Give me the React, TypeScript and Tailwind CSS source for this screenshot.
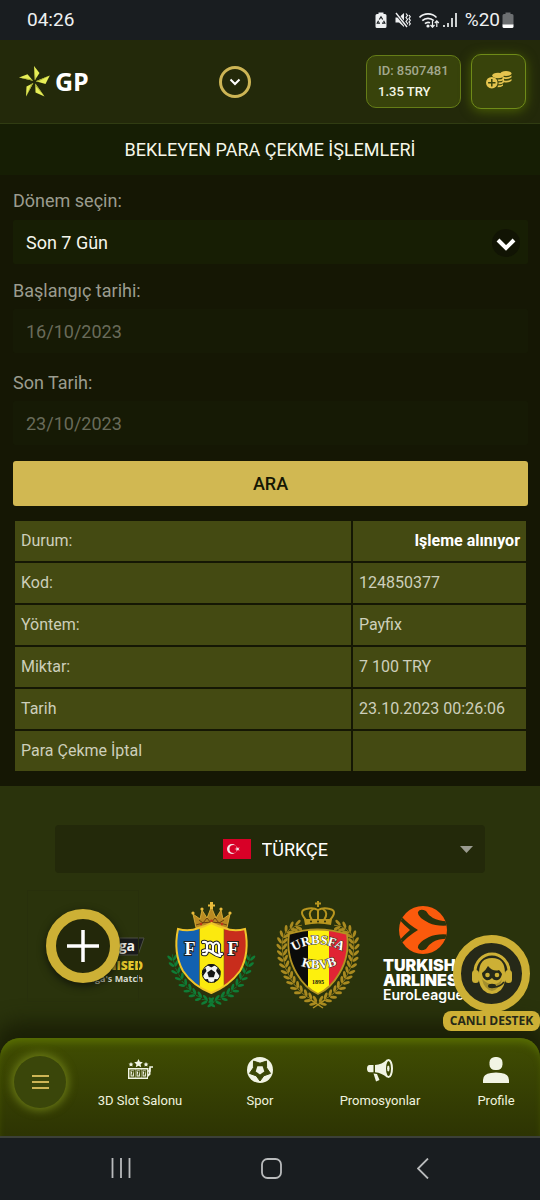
const rows = [
  { label: "Kod:", value: "124850377" },
  { label: "Yöntem:", value: "Payfix" },
  { label: "Miktar:", value: "7 100 TRY" },
  { label: "Tarih", value: "23.10.2023 00:26:06" },
  { label: "Para Çekme İptal", value: "" },
];

const StatusBar = () => {
  return (
    <div className="h-10 bg-[#191d20] pl-[27px] pr-[26px] flex items-center justify-between text-[#eef0f1]">
      <p className="text-[19px]">04:26</p>
      <div className="flex items-center gap-2">
        <svg width="12" height="17" viewBox="0 0 12 17">
          <path
            d="M3.5 2V.5h5V2H10a1.500 1.500 0 0 1 1.500 1.500v11A1.500 1.500 0 0 1 10 16H2a1.500 1.500 0 0 1-1.500-1.500v-11A1.500 1.500 0 0 1 2 2z"
            fill="#eef0f1"
          />
          <path
            d="M4.300 7.500 6 4.800l1.700 2.700M8.600 8.800l1.200 2.400H7M5 11.200H2.300l1.200-2.400"
            fill="none"
            stroke="#191d20"
            strokeWidth="1.200"
          />
        </svg>
        <svg width="16" height="16" viewBox="0 0 16 16">
          <path d="M.5 5.500H4L9 1v14l-5-4.500H.5z" fill="#eef0f1" />
          <path
            d="m11 1.500 1.500 2L11 5.500l1.500 2-1.500 2 1.500 2-1.500 2M14 3l1.300 1.800L14 6.500l1.300 1.800L14 10l1.300 1.800L14 13.500"
            fill="none"
            stroke="#eef0f1"
            strokeWidth="1.200"
          />
          <path d="m1 1 11 14" stroke="#191d20" strokeWidth="3" />
          <path d="m1 1 11 14" stroke="#eef0f1" strokeWidth="1.400" />
        </svg>
        <svg width="38" height="16" viewBox="0 0 38 16" fill="none">
          <g stroke="#eef0f1" strokeWidth="1.700">
            <path d="M.5 5.500a12 12 0 0 1 17 0M3.300 8.700a8 8 0 0 1 11.400 0M6 11.700a4.500 4.500 0 0 1 5-1" />
          </g>
          <circle cx="9" cy="14" r="1.600" fill="#eef0f1" />
          <path
            d="M13.500 9v6m-2-2 2 2.200 2-2.200M17.800 15V9m-2 2 2-2.200 2 2.200"
            stroke="#eef0f1"
            strokeWidth="1.200"
          />
          <path
            d="M25 15v-2M29 15v-4M33 15V6M37 15V1"
            stroke="#eef0f1"
            strokeWidth="1.700"
          />
        </svg>
        <div className="flex items-center gap-[2px]">
          <p className="text-[19px]">%20</p>
          <svg width="12" height="17" viewBox="0 0 12 17">
            <path
              d="M3.500 2V.5h5V2H10a1.500 1.500 0 0 1 1.500 1.500V13H.5V3.500A1.500 1.500 0 0 1 2 2z"
              fill="#6c6f71"
            />
            <path d="M.5 12.500h11v2A1.500 1.500 0 0 1 10 16H2a1.500 1.500 0 0 1-1.500-1.500z" fill="#fff" />
          </svg>
        </div>
      </div>
    </div>
  );
};

const Logo = () => {
  return (
    <a href="#" className="flex items-center gap-[5px]">
      <svg width="31" height="31" viewBox="0 0 31 31">
        <g fill="#e6ee57">
          <path d="M15 0 20.500 7 15.800 14.200z" />
          <path d="M30.800 9.500 26.500 18 16.800 15.300z" />
          <path d="M25.500 30.500 16.500 26.500 16.300 17.500z" />
          <path d="M7 30.500 7.500 20.500 14.300 17z" />
          <path d="M0 11.500 8.500 8.200 14 14.800z" />
        </g>
        <g fill="#a8ad35">
          <path d="M15 0 15.800 14.200 16.600 13z" />
          <path d="M30.800 9.500 16.800 15.300l2 .5z" />
          <path d="M25.500 30.500 16.300 17.500v2.300z" />
          <path d="M7 30.500 14.300 17l-2 1z" />
          <path d="M0 11.500 14 14.800l-1.300-1.500z" />
        </g>
      </svg>
      <span className="font-['Open_Sans'] text-[25px] font-bold text-white">GP</span>
    </a>
  );
};

const Header = () => {
  return (
    <header className="h-[84px] bg-[#23290a] border-b border-[#303c12] pl-[19px] pr-[14px] flex items-center justify-between">
      <Logo />
      <button
        aria-label="Menü"
        className="ml-4 size-8 rounded-full border-3 border-[#cdb555] flex items-center justify-center"
      >
        <svg width="12" height="8" viewBox="0 0 12 8">
          <path d="m1.500 1.500 4.500 4.500 4.500-4.500" fill="none" stroke="#fff" strokeWidth="2" />
        </svg>
      </button>
      <div className="flex items-center gap-[10px]">
        <div className="w-[95px] h-[53px] rounded-[10px] border border-[#657d17] bg-[#38430b] px-[11px] pb-[2px] flex flex-col justify-center text-[13px] font-medium leading-[21px]">
          <p className="text-[#a3a88e] whitespace-nowrap">ID: 8507481</p>
          <p className="text-[#f4f6e6]">1.35 TRY</p>
        </div>
        <button
          aria-label="Para yatır"
          className="size-[55px] rounded-[10px] border border-[#6f8b18] bg-[#38430b] shadow-[0_2px_12px_#4c6105] flex items-center justify-center pb-1"
        >
          <svg width="26" height="20" viewBox="0 0 26 20">
            <g fill="#e5c44f">
              <ellipse cx="20" cy="3.500" rx="5.500" ry="2.500" />
              <path d="M18 7q5 1 7.500-1.500v1.800Q23 9.500 18 8.800zM18 10.500q5 1 7.500-1.500v1.800q-2.500 2.200-7.500 1.500z" />
              <path d="M16.500 5.500 18 7v5.500l-1.500-.5z" />
              <ellipse cx="12" cy="5.500" rx="5.800" ry="2.800" />
              <path d="M11.500 9.500q4 .3 6-1.500v1.800q-2 1.700-5 1.500zM12.500 12.500q3.500 0 5-1.300V13q-2 1.500-5 1.300zM12 15.500q3.500 0 5-1.300v1.600q-2 1.500-5.500 1.500z" />
              <circle cx="5.800" cy="12.700" r="5.800" />
            </g>
            <path d="M5.800 9v7.400M2.100 12.700h7.400" stroke="#38430b" strokeWidth="1.500" />
          </svg>
        </button>
      </div>
    </header>
  );
};

const DateField = ({ id, label, value }: { id: string; label: string; value: string }) => {
  return (
    <div>
      <label htmlFor={id} className="block h-11 leading-[52px] text-[#9b9c8f]">
        {label}
      </label>
      <input
        id={id}
        type="text"
        disabled
        defaultValue={value}
        className="mb-1 block w-full h-11 rounded-[2px] bg-[#161a05] px-[13px] text-[#696b5a]"
      />
    </div>
  );
};

const SearchForm = () => {
  return (
    <form className="text-[18px]" onSubmit={(e) => e.preventDefault()}>
      <label htmlFor="period" className="block h-[45px] leading-[52px] text-[#9b9c8f]">
        Dönem seçin:
      </label>
      <div className="relative mb-[1px]">
        <select
          id="period"
          className="block w-full h-11 appearance-none rounded-[2px] bg-[#171e04] px-[13px] text-[#f5f6ec]"
        >
          <option>Son 7 Gün</option>
        </select>
        <span className="pointer-events-none absolute right-2 top-[9px] size-7 rounded-full bg-[#111404] flex items-center justify-center pt-1">
          <svg width="20" height="14" viewBox="0 0 20 14">
            <path d="m2 2 8 8 8-8" fill="none" stroke="#fff" strokeWidth="4" />
          </svg>
        </span>
      </div>
      <DateField id="start" label="Başlangıç tarihi:" value="16/10/2023" />
      <DateField id="end" label="Son Tarih:" value="23/10/2023" />
      <button
        type="submit"
        className="mt-4 block w-full h-[45px] rounded-[3px] bg-[#d1b852] font-medium text-[#151704]"
      >
        ARA
      </button>
    </form>
  );
};

const Withdrawals = () => {
  return (
    <table className="mt-[13px] w-full table-fixed border-separate border-spacing-[2px] text-base text-[#cdcfbb]">
      <tbody>
        <tr className="h-10">
          <th scope="row" className="w-[66%] bg-[#444a12] px-[6px] text-left font-normal">
            Durum:
          </th>
          <td className="bg-[#444a12] px-[6px] text-right font-bold text-white">Işleme alınıyor</td>
        </tr>
        {rows.map((row) => (
          <tr key={row.label} className="h-10">
            <th scope="row" className="bg-[#444a12] px-[6px] text-left font-normal">
              {row.label}
            </th>
            <td className="bg-[#444a12] px-[6px] whitespace-nowrap">{row.value}</td>
          </tr>
        ))}
      </tbody>
    </table>
  );
};

const LanguagePicker = () => {
  return (
    <div className="relative mx-[55px] h-12 rounded bg-[#23290a] pl-[11px] flex items-center justify-center gap-[11px]">
      <svg width="28" height="20" viewBox="0 0 28 20">
        <rect width="28" height="20" fill="#d80027" />
        <circle cx="9" cy="10" r="5" fill="#f3e6e8" />
        <circle cx="10.500" cy="10" r="4" fill="#d80027" />
        <path d="m11.500 10 2-.6V7.300l1.200 1.700 2-.6-1.200 1.600 1.200 1.600-2-.6-1.200 1.700v-2.100z" fill="#f3e6e8" />
      </svg>
      <select aria-label="Dil" className="appearance-none bg-transparent text-[18px] text-white">
        <option className="bg-[#23290a]">TÜRKÇE</option>
      </select>
      <svg width="13" height="7" viewBox="0 0 13 7" className="pointer-events-none absolute right-3 top-[21px]">
        <path d="M0 0h13L6.500 7z" fill="#9a9b90" />
      </svg>
    </div>
  );
};

const LaLiga = () => {
  return (
    <svg width="88" height="112" viewBox="0 0 88 112" fontFamily="Open Sans, sans-serif" fontWeight="700" textAnchor="end">
      <path d="M10 40h76l-6 17H4z" fill="#191a1b" stroke="#4c4f45" />
      <text x="77" y="53" fontSize="14" fill="#f3f3f0">LaLiga</text>
      <text x="85" y="72" fontSize="12" fontWeight="800" fill="#e3c62d">ORGANISED</text>
      <text x="85" y="84" fontSize="9" fill="#d9dbd0">LaLiga's Match</text>
    </svg>
  );
};

// leaves of a laurel branch, laid in pairs along a bent line of points
const Branch = ({ points, color, size }: { points: number[][]; color: string; size: number }) => {
  return (
    <g fill={color}>
      {points.map(([x, y, angle], i) => (
        <g key={i} transform={`translate(${x} ${y}) rotate(${angle})`}>
          <ellipse cx={size} cy={-size * 0.8} rx={size} ry={size * 0.42} transform={`rotate(-38 ${size} ${-size * 0.8})`} />
          <ellipse cx={size} cy={size * 0.8} rx={size} ry={size * 0.42} transform={`rotate(38 ${size} ${size * 0.8})`} />
          <rect width={size * 2} height="0.700" />
        </g>
      ))}
    </g>
  );
};

const fmfBranch = [
  [49, 103, 188],
  [43, 101, 193],
  [37, 98, 200],
  [31, 95, 208],
  [26, 91, 217],
  [21, 86, 227],
  [17, 80, 236],
  [13, 74, 245],
  [10, 67, 254],
  [8, 61, 262],
];

const FmfCrest = () => {
  return (
    <svg width="92" height="112" viewBox="-1 -2 92 112">
      <Branch points={fmfBranch} color="#0f7c36" size={3.300} />
      <g transform="translate(92.600 0) scale(-1 1)">
        <Branch points={fmfBranch} color="#0f7c36" size={3.300} />
      </g>
      <path
        d="M31 28 28 14l7 5 2-9 5 8 4.300-11 4.700 11 5-8 2 9 7-5-3 14q-15-6-31 0z"
        fill="#b98a22"
        stroke="#e8b93a"
        strokeWidth="0.800"
      />
      <path d="M31 25q15-6 31 0M34 20l4 3 4-5 4 5 4-5 4 5 5-3" fill="none" stroke="#6c4110" />
      <g fill="#e9bc3c">
        <circle cx="28" cy="13" r="1.600" />
        <circle cx="37" cy="9" r="1.600" />
        <circle cx="56" cy="9" r="1.600" />
        <circle cx="65" cy="13" r="1.600" />
        <path d="M45 2h3v2.500h2v2h-2V9h-3V6.500h-2v-2h2z" />
      </g>
      <g fill="#c33419">
        <circle cx="36" cy="24" r="1.200" />
        <circle cx="46.500" cy="21" r="1.400" />
        <circle cx="57" cy="24" r="1.200" />
      </g>
      <clipPath id="fmf">
        <path d="M13 29q11 3 21-1 7-2 12.300-5Q52 26 59 28q10 4 21 1 5 24-5 42Q64 86 46.300 93 28 86 18 71 8 53 13 29z" />
      </clipPath>
      <g clipPath="url(#fmf)">
        <path d="M0 20h34.500v80H0z" fill="#1261b0" />
        <path d="M34.500 20H59v80H34.500z" fill="#fbe90f" />
        <path d="M59 20h34v80H59z" fill="#c82d1c" />
      </g>
      <path d="M34.500 28v60M59 28v60" stroke="#7a6410" strokeWidth="0.600" />
      <path
        d="M13 29q11 3 21-1 7-2 12.300-5Q52 26 59 28q10 4 21 1 5 24-5 42Q64 86 46.300 93 28 86 18 71 8 53 13 29z"
        fill="none"
        stroke="#f0c52a"
        strokeWidth="2"
      />
      <g
        fontFamily="Liberation Serif, serif"
        fontWeight="700"
        fontSize="18"
        fill="#fff"
        stroke="#222"
        strokeWidth="2"
        paintOrder="stroke"
        textAnchor="middle"
      >
        <text x="25" y="55">F</text>
        <text x="68" y="55">F</text>
      </g>
      <g fill="none" strokeLinecap="round">
        <path
          d="M38 54q4 1 4-3v-6q0-4-4-3m4 3q3-5 6 0v7m0-7q4-5 6 0v6q0 4 3 3M38 51q5-2 9 1t8 4"
          stroke="#222"
          strokeWidth="4.200"
        />
        <path
          d="M38 54q4 1 4-3v-6q0-4-4-3m4 3q3-5 6 0v7m0-7q4-5 6 0v6q0 4 3 3M38 51q5-2 9 1t8 4"
          stroke="#fff"
          strokeWidth="2.200"
        />
      </g>
      <circle cx="46.300" cy="73.500" r="9" fill="#f3f3f3" stroke="#111" />
      <g fill="#151515">
        <path d="m46.300 69.500 4 3-1.500 4.700h-5l-1.500-4.700z" />
        <path d="M42 65q4-2 8.500 0l-4.200 2.500zM37 71l3.500-3 1 3-3.500 5zM55.600 71l-3.500-3-1 3 3.500 5zM39 79.500l4-.5 1 4zM53.600 79.500l-4-.5-1 4z" />
      </g>
    </svg>
  );
};

const rbfaBranch = [
  [44, 105, 205],
  [39, 102, 210],
  [34, 99, 215],
  [29, 95, 221],
  [25, 91, 227],
  [21, 86, 233],
  [18, 81, 238],
  [15, 76, 244],
  [13, 70, 250],
  [11, 64, 256],
  [10, 58, 262],
  [9, 52, 268],
  [9, 46, 275],
  [10, 40, 290],
  [13, 35, 310],
  [17, 31, 330],
  [22, 28, 350],
];

const RbfaCrest = () => {
  return (
    <svg width="90" height="112" viewBox="0 0 90 112">
      <Branch points={rbfaBranch} color="#a98a20" size={3.500} />
      <g transform="translate(90 0) scale(-1 1)">
        <Branch points={rbfaBranch} color="#a98a20" size={3.500} />
      </g>
      <path d="m40 110 12-8M50 110l-12-8" stroke="#b39322" strokeWidth="1.500" />
      <g fill="none" stroke="#b8961f" strokeWidth="2">
        <path d="M33 22q-8-9 0-11 7-2 12 1 5-3 12-1 8 2 0 11M45 11v11M39 22q-5-7 1-11M51 22q5-7-1-11M45 3v6M42 5.500h6" />
      </g>
      <path d="M31 21h28l-1 6q-13-3-26 0z" fill="#b8961f" />
      <g fill="#262c0b">
        <circle cx="38" cy="23.500" r="1" />
        <circle cx="45" cy="23.500" r="1" />
        <circle cx="52" cy="23.500" r="1" />
      </g>
      <clipPath id="rbfa">
        <path d="M16 36q28-9 58 0 3 22-8 40-8 14-21 20-13-6-21-20-11-18-8-40z" />
      </clipPath>
      <g clipPath="url(#rbfa)">
        <path d="M10 25h25v75H10z" fill="#0b0b0a" />
        <path d="M35 25h21v75H35z" fill="#fdf00d" />
        <path d="M56 25h25v75H56z" fill="#e02434" />
      </g>
      <path
        d="M16 36q28-9 58 0 3 22-8 40-8 14-21 20-13-6-21-20-11-18-8-40z"
        fill="none"
        stroke="#b39322"
        strokeWidth="1.800"
      />
      <path id="arc-top" d="M18 55Q45 37 72 55" fill="none" />
      <path id="arc-low" d="M24 66Q45 76 68 65" fill="none" />
      <g
        fontFamily="Liberation Serif, serif"
        fontWeight="700"
        fontSize="13"
        fill="#fff"
        stroke="#3a3420"
        strokeWidth="1"
        paintOrder="stroke"
        textAnchor="middle"
      >
        <text>
          <textPath href="#arc-top" startOffset="50%">URBSFA</textPath>
        </text>
        <text>
          <textPath href="#arc-low" startOffset="50%">KBVB</textPath>
        </text>
      </g>
      <text x="45" y="86" fontFamily="Liberation Serif, serif" fontWeight="700" fontSize="6" textAnchor="middle" fill="#111">
        1895
      </text>
    </svg>
  );
};

const EuroLeague = () => {
  return (
    <svg width="88" height="112" viewBox="0 0 88 112">
      <clipPath id="ball">
        <circle cx="41" cy="32" r="24" />
      </clipPath>
      <circle cx="41" cy="32" r="24" fill="#fb5a0c" />
      <g clipPath="url(#ball)" fill="#2a330c">
        <path d="M70 27Q56 29 47 25 35 19 36 14q2-4 8-1 2 4 7 7 7 4 19 3z" />
        <path d="M70 37Q56 35 47 39 35 45 36 50q2 4 8 1 2-4 7-7 7-4 19-3z" />
        <path d="m16 20 3-2q7 8 17 14-10 6-17 14l-3-2q5-6 12-12-7-6-12-12z" />
      </g>
      <g fontFamily="Inter, sans-serif" fill="#fff">
        <text x="1" y="73" fontSize="16" fontWeight="900">TURKISH</text>
        <text x="1" y="88" fontSize="16" fontWeight="900">AIRLINES</text>
        <text x="1" y="102" fontSize="14" fontWeight="600">EuroLeague</text>
      </g>
    </svg>
  );
};

const PlusButton = () => {
  return (
    <div className="absolute left-[27px] top-[104px] size-28 border border-[#28300c] flex items-center justify-center">
      <button
        aria-label="Ekle"
        className="size-[74px] shrink-0 rounded-full border-[10px] border-[#cdb035] bg-[#23280a] shadow-[0_3px_8px_#12160a] flex items-center justify-center"
      >
        <svg width="32" height="32" viewBox="0 0 32 32">
          <path d="M16 0v32M0 16h32" stroke="#fff" strokeWidth="3.500" />
        </svg>
      </button>
    </div>
  );
};

const LiveSupport = () => {
  return (
    <button className="absolute right-0 top-[149px] w-[97px] flex flex-col items-center">
      <span className="size-[77px] rounded-full border-8 border-[#cdb035] bg-[#262918] flex items-center justify-center">
        <svg width="44" height="46" viewBox="0 0 44 46">
          <path d="M5 21a17 18 0 0 1 34 0" fill="none" stroke="#cdb035" strokeWidth="3" />
          <path d="M9 22Q9 7 22 7t13 15v8q-2 12-13 13Q11 42 9 30z" fill="#cdb035" />
          <path d="M12 22q4-3 6-7 5 6 11 4 2 2 3 4-1 5-4 6-4 1-6-2-3 3-6 2-4-2-4-7z" fill="#262918" />
          <circle cx="17.500" cy="24" r="2.300" fill="#cdb035" />
          <circle cx="27" cy="24" r="2.300" fill="#cdb035" />
          <path d="M12 28q2 10 10 12 8-2 10-12-3 5-8 5-6 1-12-5z" fill="#262918" opacity="0.250" />
          <path d="M34 31q-4 5-10 5" fill="none" stroke="#262918" strokeWidth="1.500" />
          <ellipse cx="22" cy="35" rx="4" ry="2.200" fill="#262918" />
          <rect x="2" y="19" width="7" height="13" rx="3.500" fill="#cdb035" />
          <rect x="35" y="19" width="7" height="13" rx="3.500" fill="#cdb035" />
        </svg>
      </span>
      <span className="-mt-[1px] h-5 w-full rounded-[8px] bg-[#cdb035] text-center font-['Open_Sans'] text-[12px] font-bold leading-5 text-[#262918]">
        CANLI DESTEK
      </span>
    </button>
  );
};

const SlotIcon = () => {
  return (
    <svg width="26" height="24" viewBox="0 0 26 24" fill="#f1f4e4">
      <path d="m11.500 1 1.300 2.800 3 .4-2.200 2 .6 3-2.700-1.500L8.800 9.200l.6-3-2.200-2 3-.4zM4 4l.8 1.500 1.700.2-1.300 1.100.3 1.700L4 7.700l-1.500.8.3-1.700L1.500 5.700l1.700-.2zM19 4l.8 1.500 1.700.2-1.300 1.100.3 1.700-1.500-.8-1.500.8.3-1.700-1.300-1.100 1.700-.2z" />
      <path d="M1 10h20v11H1z" />
      <path d="M21 13h2V9h3" fill="none" stroke="#f1f4e4" strokeWidth="1.500" />
      <path d="M22.500 10v6l-2 2" fill="none" stroke="#f1f4e4" strokeWidth="2" />
      <g fill="none" stroke="#48530f" strokeWidth="1.200">
        <path d="M3 12h4.500v7H3zM9 12h4.500v7H9zM15 12h4.500v7H15z" />
        <path d="M4.500 13.500H6l-1 4M10.500 13.500H12l-1 4M16.500 13.500H18l-1 4" />
      </g>
    </svg>
  );
};

const BallIcon = () => {
  return (
    <svg width="26" height="26" viewBox="0 0 26 26" fill="#f1f4e4">
      <circle cx="13" cy="13" r="13" />
      <path
        d="m13 24-3.800-5.200L2.500 16.400l3.900-5.600.1-6.700L13 6.200l6.500-2.100.1 6.700 3.900 5.600-6.700 2.400z"
        fill="#3b4706"
        stroke="#3b4706"
        strokeLinejoin="round"
      />
      <path d="m13 17.500-4.300-3.100 1.700-5.100h5.200l1.700 5.100z" />
    </svg>
  );
};

const PromoIcon = () => {
  return (
    <svg width="26" height="24" viewBox="0 0 26 24" fill="#f1f4e4">
      <path d="M6.500 7H2.500Q0 7 0 10.500t2.500 3.800h4z" />
      <path d="M8 7q7-.5 12-5.500-2.500 9 0 18Q15 15 8 14.300z" />
      <path d="M6.500 15.500 10 16l2.500 6-3.500 1.500z" />
      <ellipse cx="21.500" cy="10.500" rx="3.500" ry="8.500" fill="none" stroke="#f1f4e4" strokeWidth="2" />
      <ellipse cx="21.300" cy="10.500" rx="1.200" ry="3" />
    </svg>
  );
};

const ProfileIcon = () => {
  return (
    <svg width="26" height="26" viewBox="0 0 26 26" fill="#f1f4e4">
      <rect x="6.500" y="0" width="13" height="13" rx="5.500" />
      <path d="M0 26v-3q0-6 8-7 5-1 10 0 8 1 8 7v3z" />
    </svg>
  );
};

const navItems = [
  { label: "3D Slot Salonu", icon: <SlotIcon /> },
  { label: "Spor", icon: <BallIcon /> },
  { label: "Promosyonlar", icon: <PromoIcon /> },
  { label: "Profile", icon: <ProfileIcon /> },
];

const BottomNav = () => {
  return (
    <nav className="h-[100px] rounded-t-[20px] bg-gradient-to-b from-[#414e02] to-[#2d3403] shadow-[inset_0_8px_8px_-4px_#5a7103,0_-8px_20px_8px_#1b2006] border-b-2 border-[#3c4038] grid grid-cols-[4fr_6fr_6fr_6fr_5fr]">
      <div className="flex justify-center pt-[18px]">
        <button
          aria-label="Menü"
          className="size-[52px] rounded-full bg-[#3a460a] shadow-[0_0_10px_2px_#6f7f17] flex flex-col items-center justify-center gap-1"
        >
          <span className="h-[2px] w-[17px] bg-[#cdb555]" />
          <span className="h-[2px] w-[17px] bg-[#cdb555]" />
          <span className="h-[2px] w-[17px] bg-[#cdb555]" />
        </button>
      </div>
      {navItems.map((item) => (
        <a
          key={item.label}
          href="#"
          className="flex flex-col items-center pt-[19px] text-[13px] leading-5 text-[#f0f3df] last:pl-3"
        >
          <span className="flex h-[26px] items-center justify-center">{item.icon}</span>
          <span className="mt-2 whitespace-nowrap">{item.label}</span>
        </a>
      ))}
    </nav>
  );
};

const SystemNav = () => {
  return (
    <div className="h-[62px] bg-[#191d20] pl-[45px] pr-[42px] pb-[2px] grid grid-cols-3 place-items-center">
      <button aria-label="Son uygulamalar">
        <svg width="20" height="20" viewBox="0 0 20 20">
          <path d="M1.500 0v20M10 0v20M18.500 0v20" stroke="#b9bbbc" strokeWidth="1.800" />
        </svg>
      </button>
      <button aria-label="Ana ekran">
        <svg width="21" height="21" viewBox="0 0 21 21">
          <rect x="1" y="1" width="19" height="19" rx="5.500" fill="none" stroke="#b9bbbc" strokeWidth="1.800" />
        </svg>
      </button>
      <button aria-label="Geri">
        <svg width="12" height="21" viewBox="0 0 12 21">
          <path d="m11 .5-10 10 10 10" fill="none" stroke="#b9bbbc" strokeWidth="1.800" />
        </svg>
      </button>
    </div>
  );
};

const App = () => {
  return (
    <div className="w-full bg-[#151704] font-['Roboto',sans-serif]">
      <StatusBar />
      <Header />
      <h1 className="h-[51px] bg-[#161e04] text-center text-[18px] leading-[51px] text-[#f5f7e9]">
        BEKLEYEN PARA ÇEKME İŞLEMLERİ
      </h1>
      <main className="pl-[13px] pr-3 pb-[13px]">
        <SearchForm />
        <Withdrawals />
      </main>
      <footer className="relative overflow-hidden bg-[#2a330c] pt-[39px]">
        <LanguagePicker />
        <div className="mt-[25px] mb-7 pl-12 pr-[60px] grid grid-cols-4 justify-items-center">
          <LaLiga />
          <FmfCrest />
          <RbfaCrest />
          <EuroLeague />
        </div>
        <BottomNav />
        <PlusButton />
        <LiveSupport />
      </footer>
      <SystemNav />
    </div>
  );
};

export default App;
